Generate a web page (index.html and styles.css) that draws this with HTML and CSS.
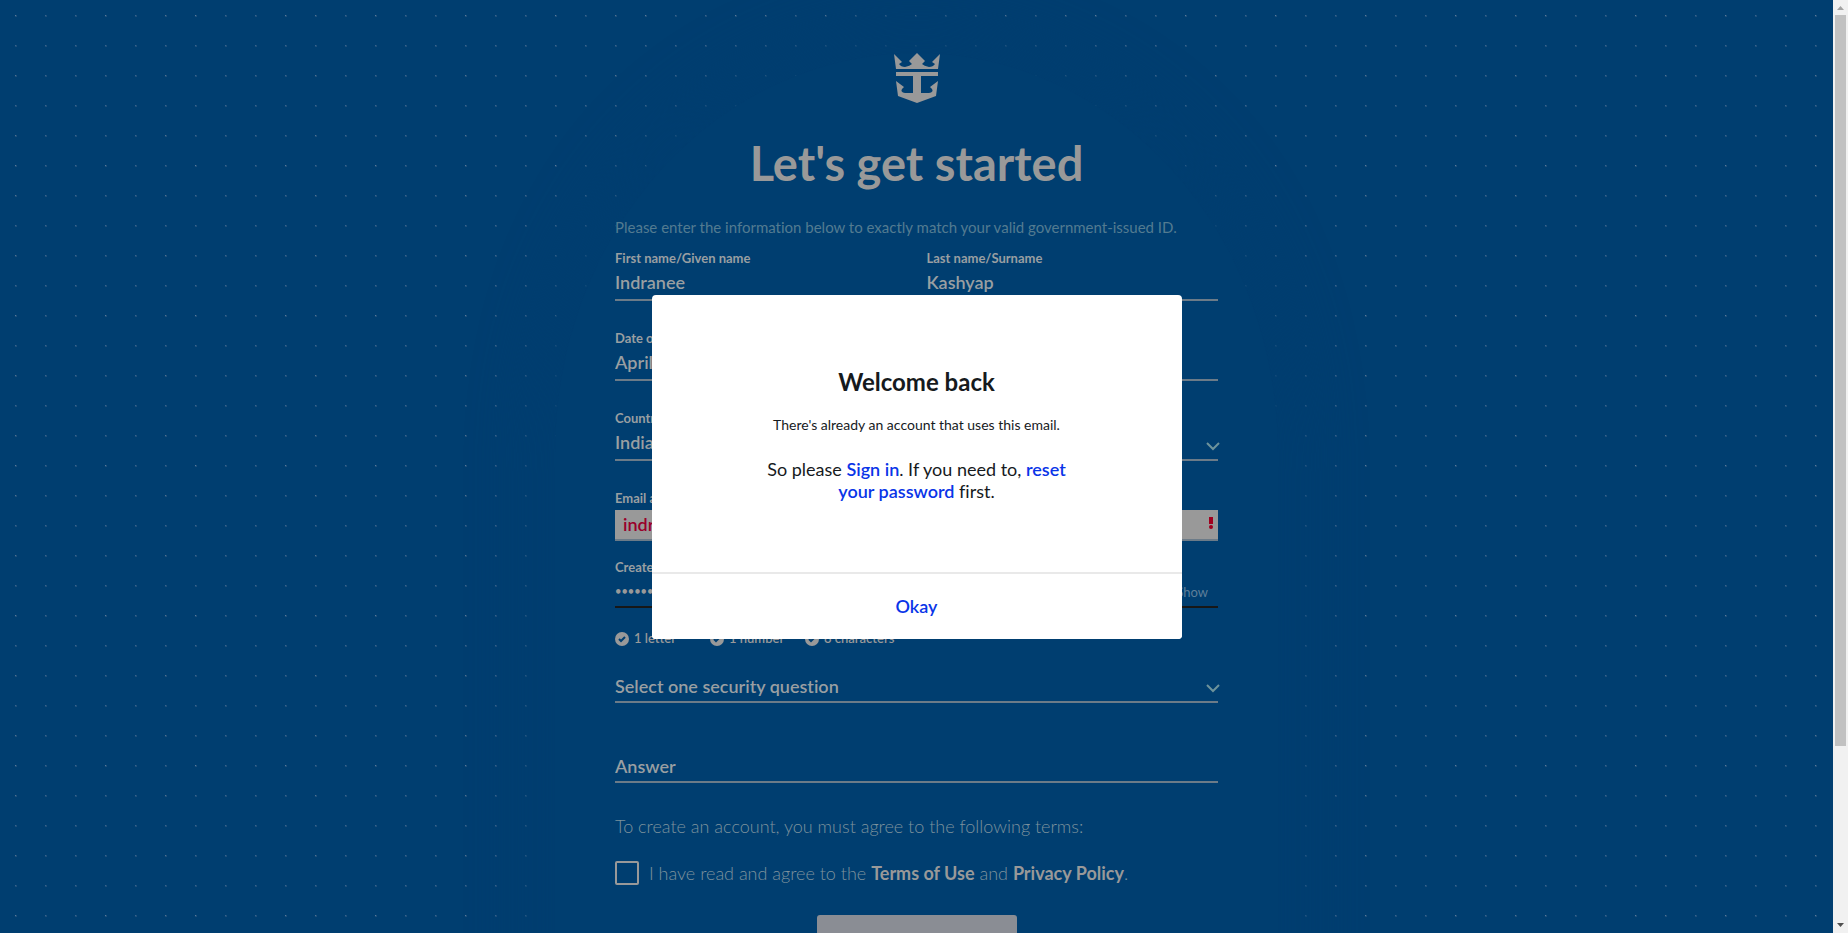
FILE: index.html
```html
<!DOCTYPE html>
<html lang="en">
<head>
<meta charset="utf-8">
<title>Create account</title>
<link rel="stylesheet" href="styles.css">
</head>
<body class="window">
<main class="page">
  <div class="column">
    <svg class="logo" viewBox="0 0 46 50" aria-hidden="true">
      <path d="M0 1L8 9L5 11Q7 14 11 14Q16 13 18 11L15 8L23 0L31 8L28 11Q30 13 35 14Q39 14 41 11L38 9L46 1L44 16H2Z"/>
      <path d="M2 19H44V23H27V40H35Q40 39 38 36L36 34L44 28L42 43L23 50L4 43L2 28L10 34L8 36Q6 39 11 40H19V23H2Z"/>
    </svg>
    <h1 class="title">Let's get started</h1>
    <p class="intro">Please enter the information below to exactly match your valid government-issued ID.</p>
    <form class="form">
      <div class="pair">
        <div class="field">
          <label class="label" for="first">First name/Given name</label>
          <input class="control" id="first" type="text" value="Indranee">
        </div>
        <div class="field">
          <label class="label" for="last">Last name/Surname</label>
          <input class="control" id="last" type="text" value="Kashyap">
        </div>
      </div>
      <div class="field spaced">
        <label class="label" for="birth">Date of birth</label>
        <input class="control" id="birth" type="text" value="April">
      </div>
      <div class="field spaced">
        <label class="label" for="country">Country</label>
        <select class="control" id="country"><option>India</option></select>
        <svg class="chevron" viewBox="0 0 14 9" aria-hidden="true"><path d="M1 1L7 7L13 1"/></svg>
      </div>
      <div class="field spaced">
        <label class="label email-label" for="email">Email address</label>
        <input class="control invalid" id="email" type="text" value="indranee">
        <span class="alert" aria-hidden="true"><svg viewBox="0 0 4 12"><path d="M0 0H4V7H0Z"/><circle cx="2" cy="10" r="2"/></svg></span>
      </div>
      <div class="field password-field">
        <label class="label" for="password">Create password</label>
        <input class="control password" id="password" type="password" value="password">
        <button class="show" type="button">Show</button>
      </div>
      <ul class="checks">
        <li class="check"><svg class="tick" viewBox="0 0 14 14" aria-hidden="true"><circle cx="7" cy="7" r="7"/><path d="M4 7L6 9L10 5"/></svg>1 letter</li>
        <li class="check"><svg class="tick" viewBox="0 0 14 14" aria-hidden="true"><circle cx="7" cy="7" r="7"/><path d="M4 7L6 9L10 5"/></svg>1 number</li>
        <li class="check"><svg class="tick" viewBox="0 0 14 14" aria-hidden="true"><circle cx="7" cy="7" r="7"/><path d="M4 7L6 9L10 5"/></svg>8 characters</li>
      </ul>
      <div class="field">
        <select class="control question" aria-label="Security question"><option>Select one security question</option></select>
        <svg class="chevron" viewBox="0 0 14 9" aria-hidden="true"><path d="M1 1L7 7L13 1"/></svg>
      </div>
      <div class="field answer">
        <input class="control question" type="text" placeholder="Answer" aria-label="Answer">
      </div>
      <p class="terms">To create an account, you must agree to the following terms:</p>
      <div class="agree">
        <input class="box" id="agree" type="checkbox">
        <label for="agree">I have read and agree to the <a class="term" href="#">Terms of Use</a> and <a class="term" href="#">Privacy Policy</a>.</label>
      </div>
      <button class="submit" type="submit" aria-label="Done"></button>
    </form>
  </div>
  <div class="overlay">
    <section class="dialog" role="dialog" aria-labelledby="dialog-title">
      <div class="message">
        <h2 class="dialog-title" id="dialog-title">Welcome back</h2>
        <p class="note">There's already an account that uses this email.</p>
        <p class="help">So please <a class="link" href="#">Sign in</a>. If you need to, <a class="link" href="#">reset your password</a> first.</p>
      </div>
      <button class="okay" type="button">Okay</button>
    </section>
  </div>
</main>
<div class="scrollbar" aria-hidden="true">
  <svg class="arrow" viewBox="0 0 15 15"><path class="arrow-up" d="M4 10L7.500 6L11 10Z"/></svg>
  <div class="track"><div class="thumb"></div></div>
  <svg class="arrow" viewBox="0 0 15 15"><path class="arrow-down" d="M4 5H11L7.500 9Z"/></svg>
</div>
</body>
</html>
```
FILE: styles.css
```css
* { box-sizing: border-box; }

.window {
  margin: 0;
  display: flex;
  height: 100vh;
  overflow: hidden;
  font-family: Lato, "Open Sans", sans-serif;
  font-variant-ligatures: none;
  color: #999;
}

.window p, .window h1, .window h2, .window ul { margin: 0; padding: 0; }
.window input, .window select, .window button { font-family: inherit; font-variant-ligatures: none; }

/* Dot grid: shades of the bright pixel drift over several tile sizes. */
.page {
  position: relative;
  flex: 1;
  overflow: hidden;
  background-color: #003e70;
  background-image:
    conic-gradient(from 270deg at 1px 1px, #5b7b98 90deg, transparent 0),
    conic-gradient(from 270deg at 1px 1px, #52738f 90deg, transparent 0),
    conic-gradient(from 270deg at 1px 1px, #3a658c 90deg, transparent 0),
    conic-gradient(from 270deg at 2px 2px, #1f507c 90deg, transparent 0);
  background-size: 90px 150px, 150px 60px, 30px 30px, 30px 30px;
  background-position: 15px 15px;
}

.column {
  width: 723px;
  margin: 53px auto 0;
  padding: 0 60px 60px;
  display: flex;
  flex-direction: column;
  align-items: center;
  background: #003e70;
  border-radius: 362px 362px 0 0 / 400px 400px 0 0;
  box-shadow: 0 0 60px 20px #003e70;
}

.logo { width: 46px; height: 50px; fill: #999; }

.title {
  font-size: 47px;
  line-height: 56px;
  font-weight: 700;
}
.window .title { margin-top: 32px; }

.intro {
  align-self: stretch;
  font-size: 15px;
  line-height: 24px;
  font-weight: 400;
  color: #537b90;
  white-space: nowrap;
}
.window .intro { margin: 24px 0 10px; }

.form { align-self: stretch; display: flex; flex-direction: column; }

.pair { display: grid; grid-template-columns: 1fr 1fr; gap: 20px; }

.field { position: relative; display: flex; flex-direction: column; }
.spaced { margin-top: 28px; }

.label { font-size: 13px; line-height: 18px; font-weight: 700; color: #999fa2; }

.control {
  width: 100%;
  height: 34px;
  padding: 0 0 2px;
  border: 0;
  border-bottom: 2px solid #6c7b88;
  border-radius: 0;
  background: none;
  appearance: none;
  outline: 0;
  color: #999fa2;
  font-size: 18px;
  font-weight: 600;
}
.control::placeholder { color: #999fa2; }
.question { padding: 2px 0 0; }

.chevron {
  position: absolute;
  right: -2px;
  bottom: 10px;
  width: 14px;
  height: 9px;
  fill: none;
  stroke: #6d939b;
  stroke-width: 2;
}

.email-label { margin-bottom: 3px; }
.invalid { height: 31px; padding: 0 8px 2px; background: #999; color: #99002b; }
.alert { position: absolute; right: 5px; bottom: 12px; height: 12px; display: flex; }
.alert svg { width: 4px; height: 12px; fill: #a0001e; }

.password-field { margin-top: 17px; }
.password { height: 32px; border-bottom-color: #171717; color: #999; font-size: 11px; }
.show {
  position: absolute;
  right: 10px;
  bottom: 7px;
  padding: 0;
  border: 0;
  background: none;
  color: #5f7f99;
  font-size: 13px;
  line-height: 18px;
}

.checks { display: flex; list-style: none; }
.window .checks { margin: 21px 0 22px; }
.check { width: 95px; display: flex; gap: 5px; font-size: 13px; line-height: 18px; font-weight: 600; white-space: nowrap; }
.tick { width: 14px; height: 14px; margin-top: 3px; flex: none; fill: #999; }
.tick path { fill: none; stroke: #003e70; stroke-width: 2; }

.answer { margin-top: 46px; }

.terms { font-size: 18px; line-height: 24px; font-weight: 300; color: #7d929d; }
.window .terms { margin: 31px 0 23px; }

.agree { display: flex; gap: 10px; font-size: 18px; line-height: 24px; font-weight: 300; color: #7d929d; }
.box { width: 24px; height: 24px; margin: 0; border: 2px solid #999; border-radius: 2px; appearance: none; }
.term { color: #999; font-weight: 700; text-decoration: none; }

.submit { align-self: center; width: 200px; height: 48px; margin-top: 30px; border: 0; border-radius: 3px; background: #8a8d94; }

.overlay { position: absolute; inset: 0; display: flex; align-items: center; justify-content: center; }

.dialog { width: 530px; display: flex; flex-direction: column; overflow: hidden; background: #fff; border-radius: 4px; color: #161a1d; text-align: center; }
.message { padding: 72px 110px 70px; border-bottom: 2px solid #e9e9e9; }
.dialog-title { font-size: 24px; line-height: 30px; font-weight: 700; }
.note { font-size: 14px; line-height: 20px; white-space: nowrap; }
.window .note { margin: 18px 0 23px; }
.help { font-size: 18px; line-height: 22px; }
.link { color: #0a35e8; font-weight: 600; text-decoration: none; }
.okay { height: 65px; padding: 0; border: 0; background: #fff; color: #0a35e8; font-size: 18px; font-weight: 600; }

.scrollbar { width: 15px; display: flex; flex-direction: column; background: #f1f1f1; }
.arrow { width: 15px; height: 15px; }
.arrow-up { fill: #a3a3a3; }
.arrow-down { fill: #505050; }
.track { flex: 1; padding: 0 2px; }
.thumb { height: 81%; background: #c1c1c1; }
```
